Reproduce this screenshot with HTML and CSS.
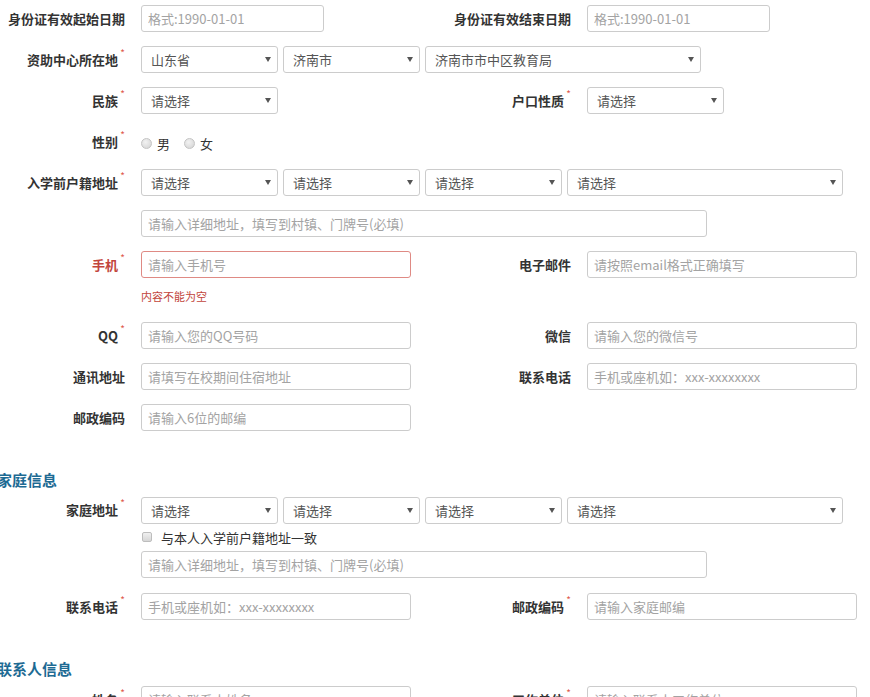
FILE: index.html
```html
<!DOCTYPE html>
<html lang="zh-CN">
<head>
<meta charset="utf-8">
<title>表单</title>
<link rel="stylesheet" href="styles.css">
</head>
<body>
<div class="form">
  <div class="row">
    <div class="field">
      <label class="lbl">身份证有效起始日期</label>
      <input class="inp w-date" placeholder="格式:1990-01-01">
    </div>
    <div class="field">
      <label class="lbl">身份证有效结束日期</label>
      <input class="inp w-date" placeholder="格式:1990-01-01">
    </div>
  </div>

  <div class="row">
    <div class="field full">
      <label class="lbl">资助中心所在地<span class="req">*</span></label>
      <div class="ctrls">
        <div class="sel w-s"><span class="val">山东省</span><span class="caret"></span></div>
        <div class="sel w-s"><span class="val">济南市</span><span class="caret"></span></div>
        <div class="sel w-l"><span class="val">济南市市中区教育局</span><span class="caret"></span></div>
      </div>
    </div>
  </div>

  <div class="row">
    <div class="field">
      <label class="lbl">民族<span class="req">*</span></label>
      <div class="sel w-s"><span class="val">请选择</span><span class="caret"></span></div>
    </div>
    <div class="field">
      <label class="lbl">户口性质<span class="req">*</span></label>
      <div class="sel w-s"><span class="val">请选择</span><span class="caret"></span></div>
    </div>
  </div>

  <div class="row">
    <div class="field full tall">
      <label class="lbl">性别<span class="req">*</span></label>
      <div class="radios">
        <span class="radio"></span><span class="rtxt">男</span>
        <span class="radio"></span><span class="rtxt">女</span>
      </div>
    </div>
  </div>

  <div class="row">
    <div class="field full">
      <label class="lbl">入学前户籍地址<span class="req">*</span></label>
      <div class="ctrls">
        <div class="sel w-s"><span class="val">请选择</span><span class="caret"></span></div>
        <div class="sel w-s"><span class="val">请选择</span><span class="caret"></span></div>
        <div class="sel w-s"><span class="val">请选择</span><span class="caret"></span></div>
        <div class="sel w-l"><span class="val">请选择</span><span class="caret"></span></div>
      </div>
    </div>
  </div>

  <div class="row">
    <div class="field full">
      <label class="lbl"></label>
      <input class="inp w-long" placeholder="请输入详细地址，填写到村镇、门牌号(必填)">
    </div>
  </div>

  <div class="row tight">
    <div class="field">
      <label class="lbl err-lbl">手机<span class="req">*</span></label>
      <input class="inp w-m err-inp" placeholder="请输入手机号">
    </div>
    <div class="field">
      <label class="lbl">电子邮件</label>
      <input class="inp w-m" placeholder="请按照email格式正确填写">
    </div>
  </div>
  <div class="errline">内容不能为空</div>

  <div class="row">
    <div class="field">
      <label class="lbl">QQ<span class="req">*</span></label>
      <input class="inp w-m" placeholder="请输入您的QQ号码">
    </div>
    <div class="field">
      <label class="lbl">微信</label>
      <input class="inp w-m" placeholder="请输入您的微信号">
    </div>
  </div>

  <div class="row">
    <div class="field">
      <label class="lbl">通讯地址</label>
      <input class="inp w-m" placeholder="请填写在校期间住宿地址">
    </div>
    <div class="field">
      <label class="lbl">联系电话</label>
      <input class="inp w-m" placeholder="手机或座机如：xxx-xxxxxxxx">
    </div>
  </div>

  <div class="row">
    <div class="field">
      <label class="lbl">邮政编码</label>
      <input class="inp w-m" placeholder="请输入6位的邮编">
    </div>
  </div>

  <h3 class="section">家庭信息</h3>

  <div class="row group">
    <div class="field full top">
      <label class="lbl">家庭地址<span class="req">*</span></label>
      <div class="stack">
        <div class="ctrls">
          <div class="sel w-s"><span class="val">请选择</span><span class="caret"></span></div>
          <div class="sel w-s"><span class="val">请选择</span><span class="caret"></span></div>
          <div class="sel w-s"><span class="val">请选择</span><span class="caret"></span></div>
          <div class="sel w-l"><span class="val">请选择</span><span class="caret"></span></div>
        </div>
        <div class="check"><span class="box"></span><span class="ctxt">与本人入学前户籍地址一致</span></div>
        <input class="inp w-long" placeholder="请输入详细地址，填写到村镇、门牌号(必填)">
      </div>
    </div>
  </div>

  <div class="row">
    <div class="field">
      <label class="lbl">联系电话<span class="req">*</span></label>
      <input class="inp w-m" placeholder="手机或座机如：xxx-xxxxxxxx">
    </div>
    <div class="field">
      <label class="lbl">邮政编码<span class="req">*</span></label>
      <input class="inp w-m" placeholder="请输入家庭邮编">
    </div>
  </div>

  <h3 class="section">联系人信息</h3>

  <div class="row">
    <div class="field">
      <label class="lbl">姓名<span class="req">*</span></label>
      <input class="inp w-m" placeholder="请输入联系人姓名">
    </div>
    <div class="field">
      <label class="lbl">工作单位<span class="req">*</span></label>
      <input class="inp w-m" placeholder="请输入联系人工作单位">
    </div>
  </div>
</div>
</body>
</html>
```

FILE: styles.css
```css
* { box-sizing: border-box; }

html, body {
  margin: 0;
  padding: 0;
  background: #fff;
  overflow: hidden;
}

body {
  font-family: "Noto Sans CJK SC", "Noto Sans", sans-serif;
  font-size: 13px;
  color: #333;
}

.form {
  padding-top: 5px;
  width: 900px;
}

.row {
  display: flex;
  margin-bottom: 14px;
}

.row.tight { margin-bottom: 0; }
.row.group { margin-bottom: 15px; }

.field {
  display: flex;
  align-items: center;
  width: 446px;
  flex-shrink: 0;
}

.field.full { width: auto; }
.field.tall { height: 27px; }
.field.top { align-items: flex-start; }
.field.top .lbl { margin-top: 4px; }

.lbl {
  width: 125px;
  flex-shrink: 0;
  margin-right: 16px;
  text-align: right;
  font-weight: bold;
  font-size: 13px;
  line-height: 18px;
  color: #333;
  white-space: nowrap;
}

.req {
  display: inline-block;
  position: relative;
  top: -3px;
  width: 7px;
  text-align: right;
  font-size: 10px;
  line-height: 10px;
  vertical-align: top;
  color: #e05a4f;
  font-weight: normal;
}

.err-lbl { color: #c2453c; }

.inp {
  display: block;
  height: 27px;
  border: 1px solid #ccc;
  border-radius: 3px;
  padding: 0 6px;
  font-family: "Noto Sans CJK SC", "Noto Sans", sans-serif;
  font-size: 13px;
  color: #555;
  background: #fff;
  outline: none;
}

.inp::placeholder { color: #a3a3a3; }

.err-inp { border-color: #df8a84; }

.w-date { width: 183px; }
.w-m { width: 270px; }
.w-long { width: 566px; }
.w-s { width: 137px; }
.w-l { width: 276px; }

.ctrls {
  display: flex;
  gap: 5px;
}

.stack {
  display: flex;
  flex-direction: column;
}

.sel {
  height: 27px;
  border: 1px solid #ccc;
  border-radius: 3px;
  display: flex;
  align-items: center;
  justify-content: space-between;
  padding: 0 6px 0 9px;
  color: #555;
  font-size: 13px;
  background: #fff;
}

.caret {
  width: 0;
  height: 0;
  border-left: 3px solid transparent;
  border-right: 3px solid transparent;
  border-top: 5px solid #555;
}

.radios {
  display: flex;
  align-items: center;
  padding-top: 4px;
}

.radio {
  width: 11px;
  height: 11px;
  border-radius: 50%;
  border: 1px solid #c4c4c4;
  background: radial-gradient(circle at 40% 35%, #f2f2f2, #d2d2d2);
  margin-right: 5px;
}

.rtxt {
  margin-right: 14px;
  color: #333;
  line-height: 18px;
}

.check {
  display: flex;
  align-items: center;
  height: 27px;
  padding-left: 1px;
}

.box {
  width: 10px;
  height: 10px;
  border: 1px solid #bdbdbd;
  border-radius: 2px;
  background: linear-gradient(#f0f0f0, #d6d6d6);
  margin-right: 9px;
  margin-top: -2px;
}

.ctxt {
  color: #333;
  font-size: 13px;
}

.errline {
  height: 30px;
  padding: 10px 0 0 141px;
  margin-bottom: 14px;
  font-size: 11px;
  line-height: 16px;
  color: #c2453c;
}

.section {
  margin: 39px 0 7px -3px;
  font-size: 15px;
  line-height: 20px;
  font-weight: bold;
  color: #1d6a93;
}
```
